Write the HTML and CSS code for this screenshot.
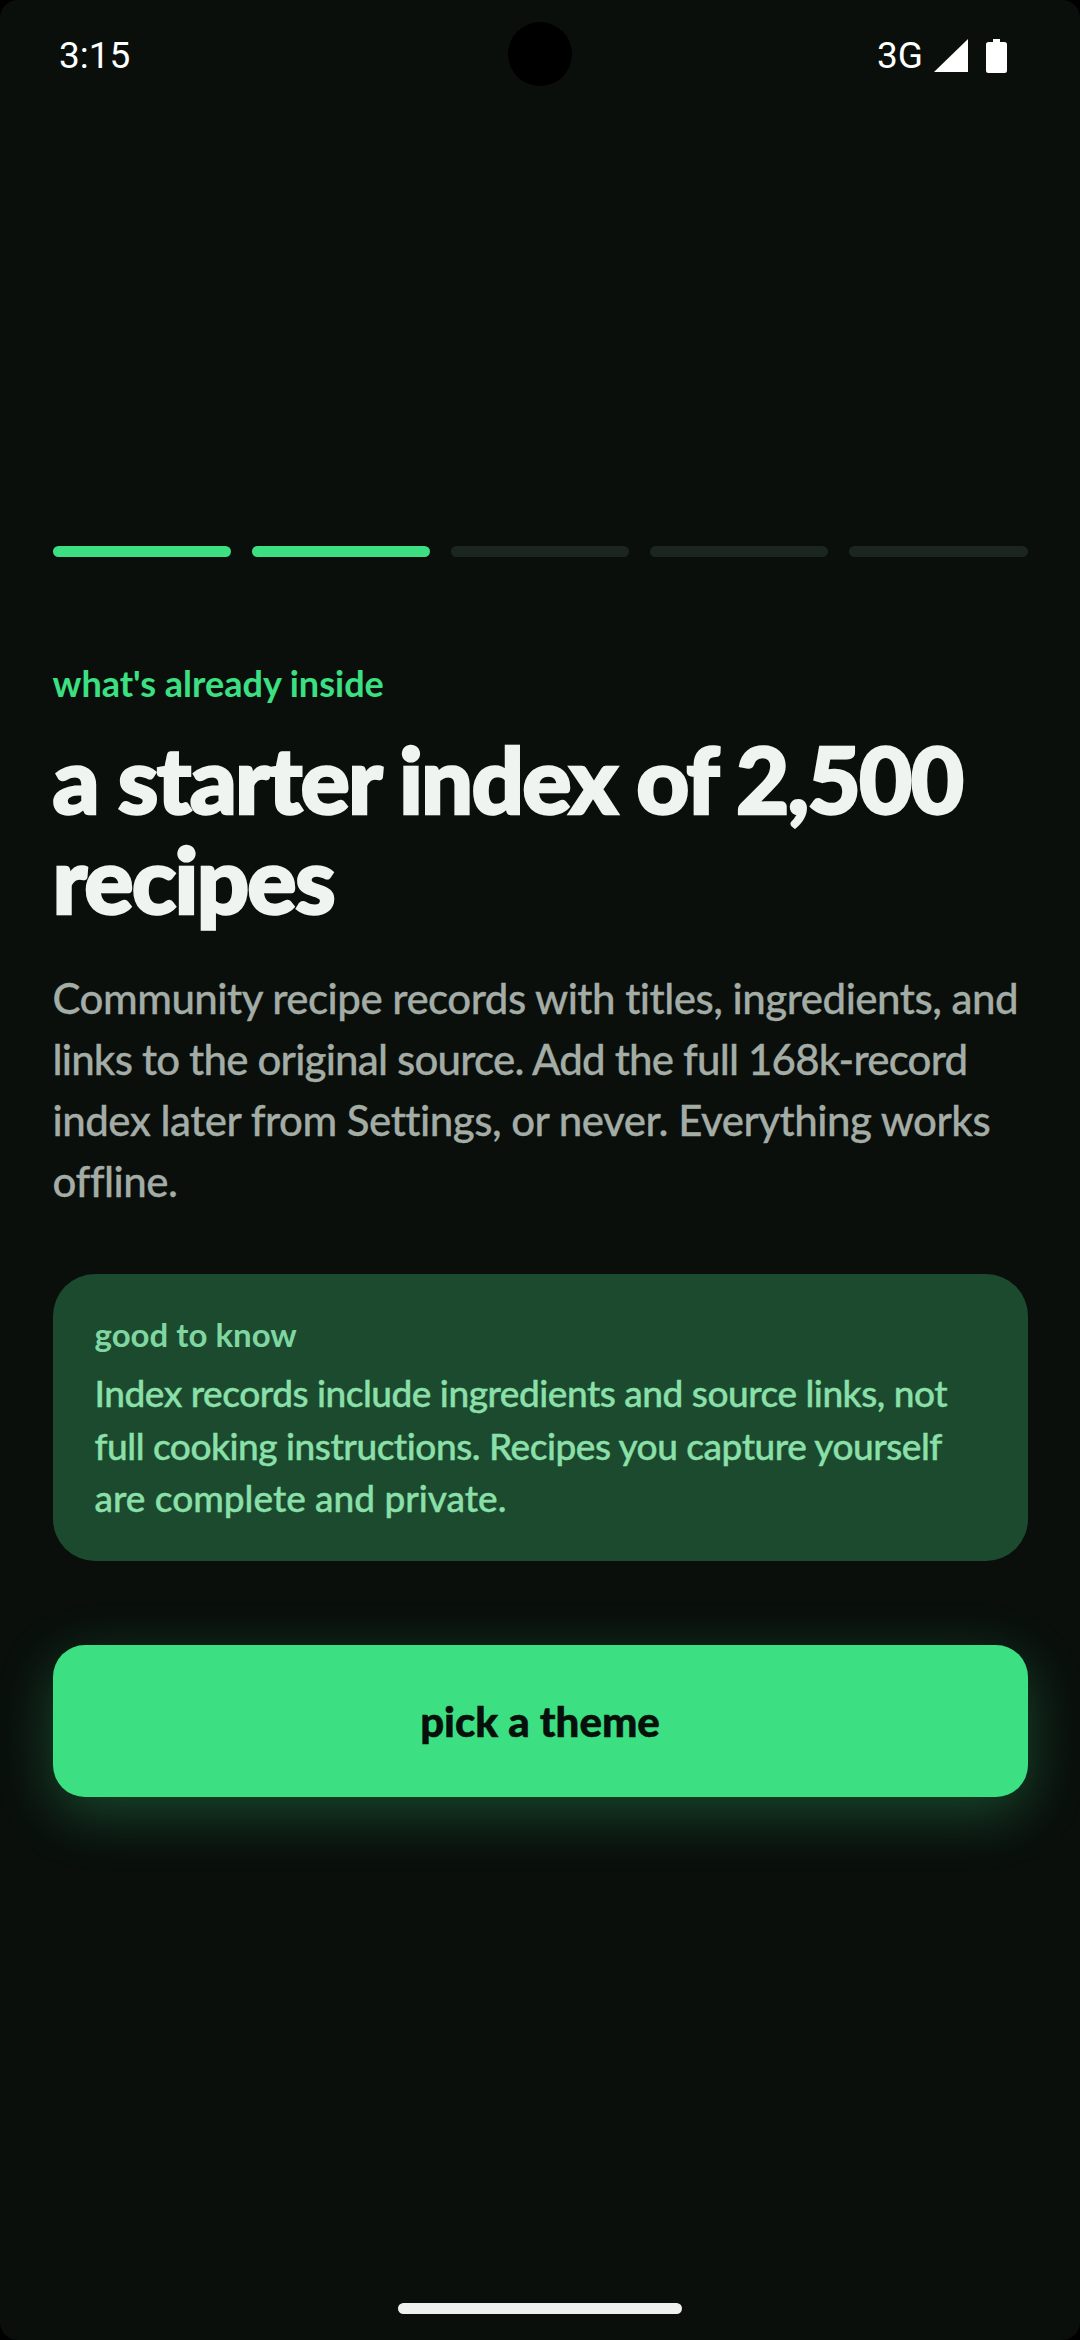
FILE: index.html
```html
<!DOCTYPE html>
<html lang="en">

<head>
    <meta charset="UTF-8">
    <meta name="viewport" content="width=device-width, initial-scale=1.0">
    <title>Onboarding</title>
    <link rel="stylesheet" href="styles.css">
</head>

<body>
    <div class="screen">
        <!-- Status bar -->
        <div class="status-bar">
            <span class="status-time">3:15</span>
            <div class="camera"></div>
            <div class="status-icons">
                <span class="status-net">3G</span>
                <svg class="icon-signal" viewBox="0 0 34 33"><path d="M34 0V33H0Z" fill="#fff"/></svg>
                <svg class="icon-battery" viewBox="0 0 21 34"><path d="M7 0H14V3H18.500A2.500 2.500 0 0 1 21 5.500V31.500A2.500 2.500 0 0 1 18.500 34H2.500A2.500 2.500 0 0 1 0 31.500V5.500A2.500 2.500 0 0 1 2.500 3H7Z" fill="#fff"/></svg>
            </div>
        </div>

        <div class="content">
            <!-- Step progress -->
            <div class="steps">
                <div class="step done"></div>
                <div class="step done"></div>
                <div class="step"></div>
                <div class="step"></div>
                <div class="step"></div>
            </div>

            <p class="eyebrow">what's already inside</p>
            <h1 class="title">a starter index of 2,500<br>recipes</h1>
            <p class="body-text">
                <span class="line">Community recipe records with titles, ingredients, and</span>
                <span class="line narrow">links to the original source. Add the full 168k-record</span>
                <span class="line">index later from Settings, or never. Everything works</span>
                <span class="line">offline.</span>
            </p>

            <div class="note">
                <div class="note-label">good to know</div>
                <div class="note-text">
                    <span class="line narrow">Index records include ingredients and source links, not</span>
                    <span class="line narrow">full cooking instructions. Recipes you capture yourself</span>
                    <span class="line">are complete and private.</span>
                </div>
            </div>

            <button class="next">pick a theme</button>
        </div>

        <div class="home-bar"></div>
    </div>
</body>

</html>
```

FILE: styles.css
```css
/* General Reset */
html, body {
    margin: 0;
    padding: 0;
    background: #000;
}

.screen {
    width: 1080px;
    height: 2340px;
    display: flex;
    flex-direction: column;
    position: relative;
    overflow: hidden;
    background: #0a0f0c;
    border-radius: 18px;
    font-family: Lato, "Noto Sans", sans-serif;
}

/* Status bar */
.status-bar {
    height: 111px;
    padding: 0 73px 0 59px;
    display: flex;
    justify-content: space-between;
    align-items: center;
    color: #fff;
    font-family: Roboto, sans-serif;
    font-size: 37px;
    box-sizing: border-box;
}

.camera {
    position: absolute;
    top: 22px;
    left: 508px;
    width: 64px;
    height: 64px;
    border-radius: 50%;
    background: #000;
}

.status-icons {
    display: flex;
    align-items: center;
}

.status-net {
    margin-right: 11px;
}

.icon-signal {
    width: 34px;
    height: 33px;
    margin-right: 18px;
}

.icon-battery {
    width: 21px;
    height: 34px;
}

/* Main column */
.content {
    padding: 435px 52.500px 0;
}

.steps {
    display: flex;
    gap: 21px;
}

.step {
    flex: 1;
    height: 11px;
    border-radius: 6px;
    background: #1c2621;
}

.step.done {
    background: #3ce082;
}

.eyebrow {
    margin: 102px 0 0;
    font-size: 36px;
    line-height: 48px;
    font-weight: 700;
    color: #3ce082;
}

.title {
    margin: 22px 0 0;
    font-size: 92px;
    line-height: 100px;
    font-weight: 900;
    letter-spacing: -1.800px;
    -webkit-text-stroke: 2.500px #f0f4f1;
    color: #f0f4f1;
}

/* Text blocks keep the line breaks of the design */
.line {
    display: block;
    white-space: nowrap;
}

.body-text {
    margin: 39px 0 0;
    font-size: 42px;
    line-height: 61px;
    font-weight: 500;
    letter-spacing: -0.500px;
    -webkit-text-stroke: 0.300px #a3aca5;
    color: #a3aca5;
}

.body-text .narrow {
    letter-spacing: -0.800px;
}

.note {
    margin-top: 62px;
    padding: 38px 42px 36px;
    border-radius: 42px;
    background: #1c4a2f;
}

.note-label {
    font-size: 33px;
    line-height: 44px;
    font-weight: 700;
    color: #7fd6a0;
}

.note-text {
    margin-top: 11px;
    font-size: 37px;
    line-height: 52.500px;
    font-weight: 500;
    -webkit-text-stroke: 0.400px #8be0aa;
    color: #8be0aa;
}

.note-text .narrow {
    letter-spacing: -0.470px;
}

/* Buttons */
.next {
    display: block;
    width: 100%;
    height: 152px;
    margin-top: 84px;
    border: none;
    border-radius: 32px;
    background: #3ce082;
    color: #08100b;
    font-family: inherit;
    font-size: 42px;
    font-weight: 900;
    -webkit-text-stroke: 0.500px #08100b;
    box-shadow: 0 16px 56px rgba(60, 224, 130, 0.28);
}

.home-bar {
    position: absolute;
    left: 398px;
    bottom: 26px;
    width: 284px;
    height: 11px;
    border-radius: 6px;
    background: #eef1ee;
}
```
